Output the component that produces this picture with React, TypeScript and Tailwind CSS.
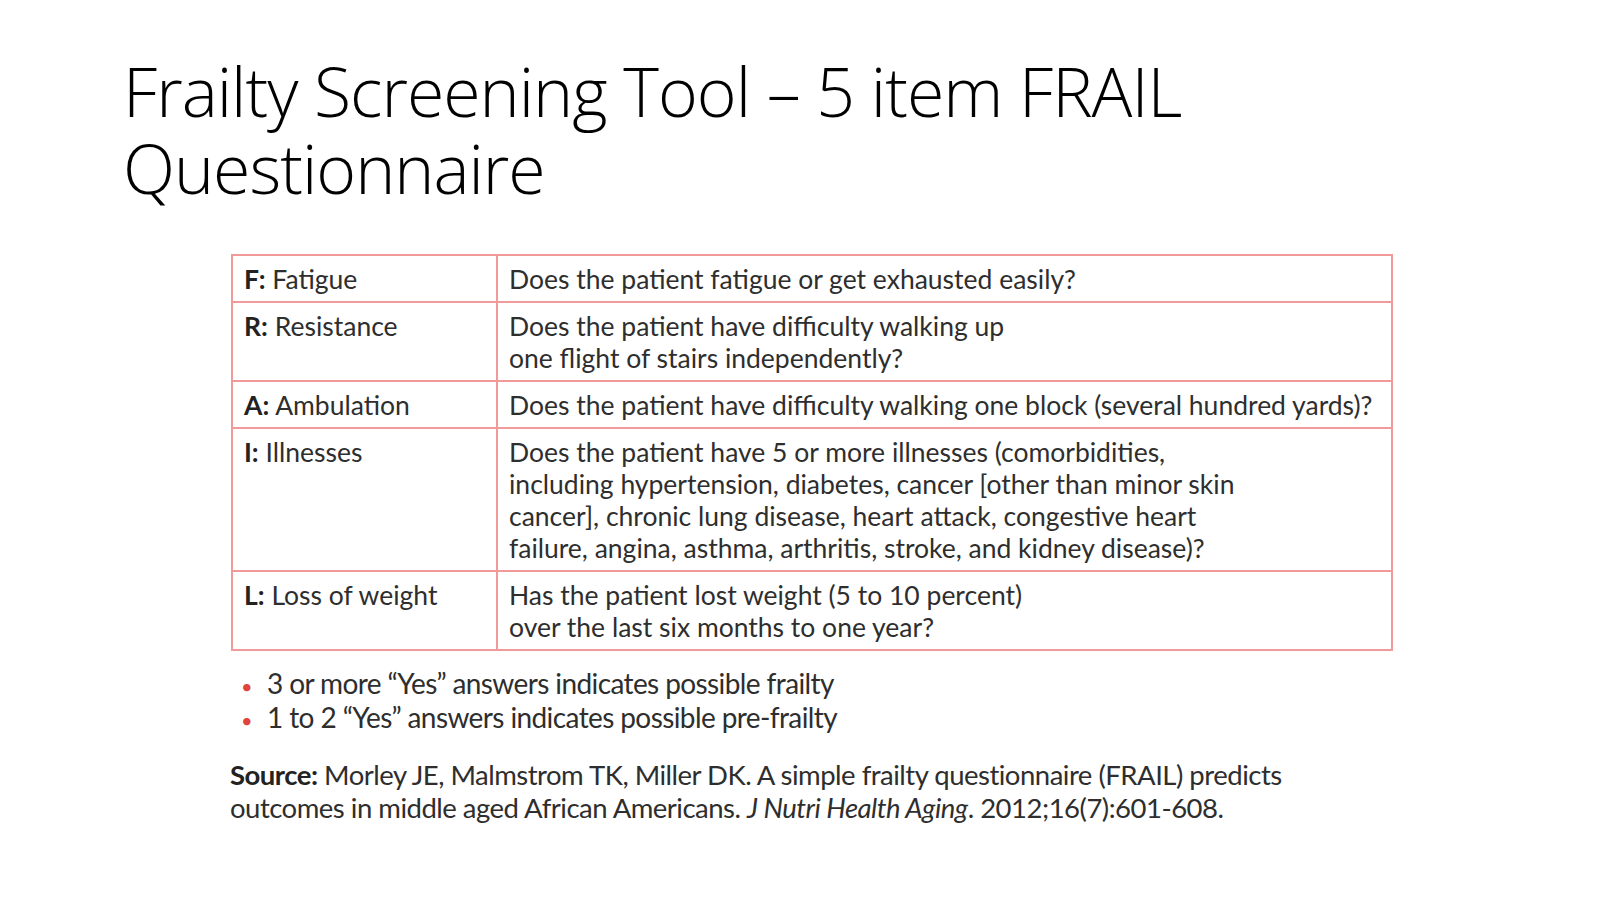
const rows = [
  { key: "F:", label: "Fatigue", text: ["Does the patient fatigue or get exhausted easily?"] },
  {
    key: "R:",
    label: "Resistance",
    text: ["Does the patient have difficulty walking up", "one flight of stairs independently?"],
  },
  {
    key: "A:",
    label: "Ambulation",
    text: ["Does the patient have difficulty walking one block (several hundred yards)?"],
  },
  {
    key: "I:",
    label: "Illnesses",
    text: [
      "Does the patient have 5 or more illnesses (comorbidities,",
      "including hypertension, diabetes, cancer [other than minor skin",
      "cancer], chronic lung disease, heart attack, congestive heart",
      "failure, angina, asthma, arthritis, stroke, and kidney disease)?",
    ],
  },
  {
    key: "L:",
    label: "Loss of weight",
    text: ["Has the patient lost weight (5 to 10 percent)", "over the last six months to one year?"],
  },
];

export default function App() {
  return (
    <div className="w-[1600px] h-[900px] bg-white overflow-hidden">
      <h1 className="pl-[123px] pt-[52px] font-['Open_Sans',sans-serif] font-light text-[68px] leading-[77px] text-black tracking-[-1px]">
        Frailty Screening Tool – 5 item FRAIL
        <br />
        Questionnaire
      </h1>

      <div className="ml-[231px] mt-[48px] w-[1162px] font-['Lato',sans-serif] text-[#2e2e2e]">
        <table className="w-full border-collapse border-2 border-[#f29a9a] text-[26.5px] leading-[32px]">
          <tbody>
            {rows.map((r) => (
              <tr key={r.key}>
                <td className="w-[265px] border-2 border-[#f29a9a] px-[11px] py-[6.5px] align-top">
                  <span className="font-bold text-[#222222]">{r.key}</span> {r.label}
                </td>
                <td className="border-2 border-[#f29a9a] px-[11px] py-[6.5px] align-top">
                  {r.text.map((t, i) => (
                    <div key={i}>{t}</div>
                  ))}
                </td>
              </tr>
            ))}
          </tbody>
        </table>

        <ul className="mt-[15px] pl-[10px] text-[28px] leading-[34px] tracking-[-0.6px]">
          <li className="flex items-baseline gap-[15px]">
            <span className="text-[#e0443a] text-[20px] leading-none">•</span>
            <span>3 or more “Yes” answers indicates possible frailty</span>
          </li>
          <li className="flex items-baseline gap-[15px]">
            <span className="text-[#e0443a] text-[20px] leading-none">•</span>
            <span>1 to 2 “Yes” answers indicates possible pre-frailty</span>
          </li>
        </ul>

        <p className="mt-[24px] -ml-[1px] text-[27.5px] leading-[33px] tracking-[-0.5px]">
          <span className="font-bold text-[#222222]">Source:</span> Morley JE, Malmstrom TK, Miller DK. A simple
          frailty questionnaire (FRAIL) predicts
          <br />
          outcomes in middle aged African Americans. <i>J Nutri Health Aging</i>. 2012;16(7):601-608.
        </p>
      </div>
    </div>
  );
}
